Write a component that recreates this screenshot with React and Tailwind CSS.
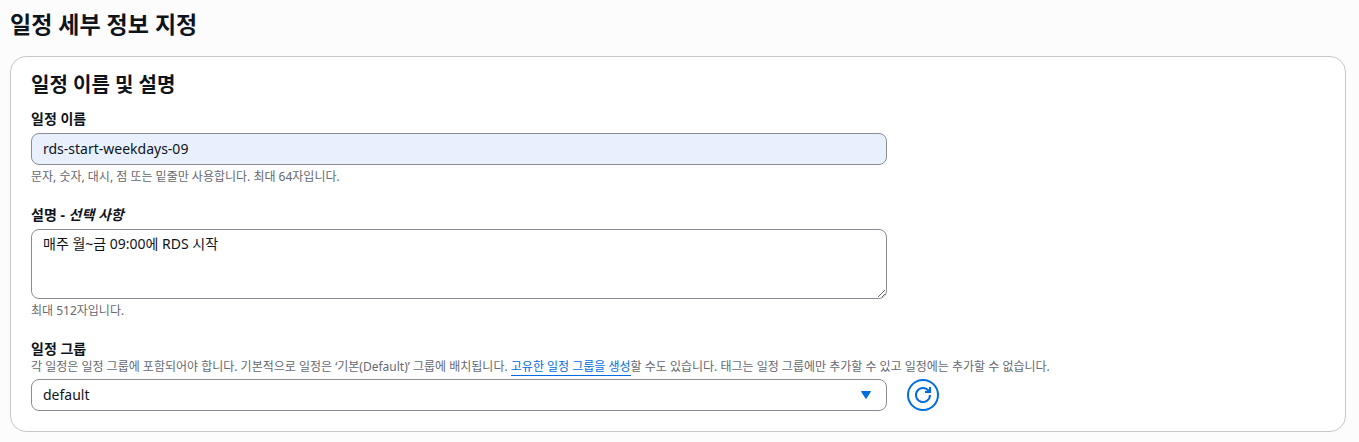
import { useState } from 'react';

function Caret() {
  return (
    <svg
      className="pointer-events-none absolute inset-y-0 right-[13px] my-auto h-4 w-4 fill-[#006ce0] stroke-[#006ce0]"
      viewBox="0 0 16 16"
      strokeWidth="1"
      strokeLinejoin="round"
      aria-hidden="true"
    >
      <path d="M3.5 4.5h9L8 11.5z" />
    </svg>
  );
}

function RefreshIcon() {
  return (
    <svg className="h-4 w-4 fill-none stroke-[#006ce0]" viewBox="0 0 16 16" strokeWidth="2" aria-hidden="true">
      <path d="M15 8a7 7 0 1 1-1.9-4.8L14.6 5" />
      <path d="M10 5h5V0" />
    </svg>
  );
}

function Label({ htmlFor, children }) {
  return (
    <label htmlFor={htmlFor} className="block text-[14px] leading-5 font-bold">
      {children}
    </label>
  );
}

function Hint({ id, children }) {
  return (
    <p id={id} className="text-[12px] leading-4 text-[#656871]">
      {children}
    </p>
  );
}

const control = 'block w-full rounded-lg border border-[#8c8c94] px-[11px] text-[14px] outline-none';

export default function App() {
  const [name, setName] = useState('rds-start-weekdays-09');
  const [description, setDescription] = useState('매주 월~금 09:00에 RDS 시작');
  const [group, setGroup] = useState('default');

  return (
    <main className="min-h-screen bg-[#fcfcfd] pt-2 pr-[13px] pb-2 pl-[10px] font-['Noto_Sans','Noto_Sans_CJK_KR',sans-serif] text-[#0f141a]">
      <h1 className="text-[23px] leading-8 font-bold">일정 세부 정보 지정</h1>

      <section className="mt-4 rounded-2xl border border-[#c6c6cd] bg-white px-5 pt-3.5 pb-5">
        <h2 className="text-[20px] leading-7 font-bold">일정 이름 및 설명</h2>

        <form className="mt-2.5 space-y-5" onSubmit={(e) => e.preventDefault()}>
          <div className="space-y-1">
            <Label htmlFor="schedule-name">일정 이름</Label>
            <div className="grid grid-cols-12 gap-5">
              <input
                id="schedule-name"
                type="text"
                aria-describedby="name-hint"
                className={`${control} col-span-8 h-8 bg-[#e8f0fe] pb-0.5`}
                value={name}
                onChange={(e) => setName(e.target.value)}
              />
            </div>
            <Hint id="name-hint">문자, 숫자, 대시, 점 또는 밑줄만 사용합니다. 최대 64자입니다.</Hint>
          </div>

          <div className="space-y-1">
            <Label htmlFor="schedule-description">
              설명 - <i>선택 사항</i>
            </Label>
            <div className="grid grid-cols-12 gap-5">
              <textarea
                id="schedule-description"
                rows={3}
                aria-describedby="description-hint"
                className={`${control} col-span-8 h-[70px] resize-y bg-white py-1 leading-5`}
                value={description}
                onChange={(e) => setDescription(e.target.value)}
              />
            </div>
            <Hint id="description-hint">최대 512자입니다.</Hint>
          </div>

          <div>
            <Label htmlFor="schedule-group">일정 그룹</Label>
            <Hint id="group-hint">
              각 일정은 일정 그룹에 포함되어야 합니다. 기본적으로 일정은 ‘기본(Default)’ 그룹에 배치됩니다.{' '}
              <a href="#create-group" className="border-b border-[#006ce0] text-[#006ce0]">
                고유한 일정 그룹을 생성
              </a>
              할 수도 있습니다. 태그는 일정 그룹에만 추가할 수 있고 일정에는 추가할 수 없습니다.
            </Hint>
            <div className="mt-1 grid grid-cols-12 gap-5">
              <div className="relative col-span-8">
                <select
                  id="schedule-group"
                  aria-describedby="group-hint"
                  className={`${control} h-8 appearance-none bg-white pb-0.5`}
                  value={group}
                  onChange={(e) => setGroup(e.target.value)}
                >
                  <option value="default">default</option>
                </select>
                <Caret />
              </div>
              <button
                type="button"
                aria-label="새로 고침"
                className="flex h-8 w-8 items-center justify-center rounded-full border-2 border-[#006ce0]"
              >
                <RefreshIcon />
              </button>
            </div>
          </div>
        </form>
      </section>
    </main>
  );
}
